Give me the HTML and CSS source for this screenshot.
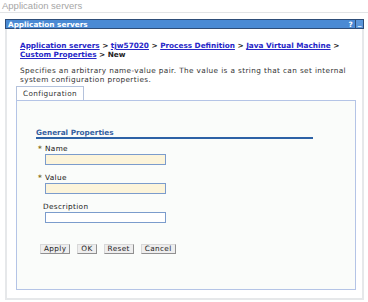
FILE: index.html
```html
<!DOCTYPE html>
<html lang="en">
<head>
    <meta charset="UTF-8">
    <title>Application servers</title>
    <link rel="stylesheet" href="styles.css">
</head>
<body>
    <div class="page-title">Application servers</div>

    <div class="portlet">
        <div class="portlet-head">
            <span class="portlet-title">Application servers</span>
            <span class="portlet-tools">
                <span class="tool-help">?</span>
                <span class="tool-min">_</span>
            </span>
        </div>
        <div class="portlet-body">
            <div class="crumbs">
                <a href="#">Application servers</a> &gt; <a href="#">tjw57020</a> &gt; <a href="#">Process Definition</a> &gt; <a href="#">Java Virtual Machine</a> &gt;
                <a href="#">Custom Properties</a> &gt; New
            </div>
            <p class="intro">Specifies an arbitrary name-value pair. The value is a string that can set internal system configuration properties.</p>

            <div class="tabs">
                <span class="tab">Configuration</span>
            </div>
            <div class="tab-panel">
                <h3 class="section">General Properties</h3>

                <div class="field">
                    <label for="name"><span class="req">*</span>Name</label>
                    <input type="text" id="name" class="req-input">
                </div>
                <div class="field">
                    <label for="value"><span class="req">*</span>Value</label>
                    <input type="text" id="value" class="req-input">
                </div>
                <div class="field">
                    <label for="desc" class="plain">Description</label>
                    <input type="text" id="desc">
                </div>

                <div class="buttons">
                    <button type="button">Apply</button>
                    <button type="button">OK</button>
                    <button type="button">Reset</button>
                    <button type="button">Cancel</button>
                </div>
            </div>
        </div>
    </div>
</body>
</html>
```
FILE: styles.css
```css
body {
    margin: 0;
    font-family: "DejaVu Sans", Verdana, sans-serif;
    font-size: 7.3px;
    line-height: 9px;
    color: #222;
    background: #fff;
}
.page-title {
    font-family: "Liberation Sans", Arial, sans-serif;
    font-size: 9.5px;
    line-height: 12px;
    color: #a6a6a6;
    padding: 0 2px;
    border-bottom: 1px solid #e2e4e6;
}
.portlet {
    margin: 6px 4px 0 5px;
}
.portlet-head {
    display: flex;
    justify-content: space-between;
    align-items: center;
    height: 8px;
    background: #4a8ad4;
    border: 1px solid #2e4d78;
    color: #fff;
    font-weight: bold;
}
.portlet-title {
    padding-left: 2px;
}
.portlet-tools {
    display: flex;
    align-items: center;
}
.tool-help {
    width: 7px;
    text-align: center;
    margin-right: 1px;
}
.tool-min {
    width: 7px;
    height: 8px;
    line-height: 5px;
    text-align: center;
    background: #5a96da;
    border-left: 1px solid #2e4d78;
}
.portlet-body {
    border: 2px solid #e6e8ea;
    border-top: none;
    padding: 12px 6px 8px 9px;
}
.crumbs {
    padding-left: 4px;
    font-weight: bold;
}
.crumbs a {
    color: #2727c8;
}
.intro {
    margin: 7px 0 0;
    padding-left: 4px;
    color: #333;
    letter-spacing: 0.38px;
}
.tabs {
    display: flex;
    margin-top: 2px;
}
.tab {
    padding: 2px 6px 2px 6px;
    height: 9px;
    border: 1px solid #b4c2dc;
    border-bottom: none;
    background: #fff;
    color: #333;
    letter-spacing: 0.35px;
}
.tab-panel {
    height: 161px;
    padding: 27px 42px 0 19px;
    border: 1px solid #b4c4e6;
    background: #fafcfa;
}
.section {
    margin: 0;
    font-size: 7.3px;
    line-height: 9px;
    color: #3460a0;
    border-bottom: 2px solid #2d62a6;
}
.field {
    display: flex;
    flex-direction: column;
    margin-top: 5px;
    padding-left: 2px;
    letter-spacing: 0.35px;
}
.field + .field {
    margin-top: 8px;
}
.field label {
    color: #111;
}
.field label.plain {
    margin-left: 5px;
    color: #222;
}
.req {
    display: inline-block;
    width: 7px;
    color: #806a18;
    font-weight: bold;
}
.field input {
    box-sizing: border-box;
    width: 121px;
    height: 11px;
    margin: 1px 0 0 7px;
    padding: 0;
    border: 1px solid #7b9ccc;
    background: #fff;
}
.field input.req-input {
    background: #fcf4da;
}
.buttons {
    display: flex;
    gap: 7px;
    margin: 21px 0 0 4px;
}
button {
    height: 10px;
    padding: 0 3px;
    font-family: inherit;
    font-size: 7.3px;
    line-height: 8px;
    letter-spacing: 0.35px;
    color: #222;
    background: #eeeeee;
    border: 1px solid;
    border-color: #d8d8d8 #909090 #909090 #d8d8d8;
}
```
